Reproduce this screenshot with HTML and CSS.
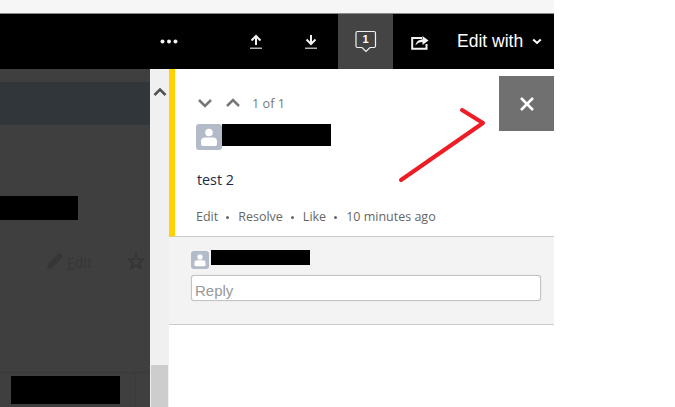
FILE: index.html
```html
<!DOCTYPE html>
<html lang="en">

<head>
    <meta charset="UTF-8">
    <meta name="viewport" content="width=device-width, initial-scale=1.0">
    <title>Comments</title>
    <link rel="stylesheet" href="styles.css">
</head>

<body>
    <div class="window">
        <div class="browser-strip"></div>
        <header class="topbar">
            <span class="tool tool-more">
                <svg width="18" height="5" viewBox="0 0 18 5"><circle cx="2.500" cy="2.500" r="2" /><circle cx="9" cy="2.500" r="2" /><circle cx="15.500" cy="2.500" r="2" /></svg>
            </span>
            <span class="tool tool-up">
                <svg width="14" height="16" viewBox="0 0 14 16"><path class="arrow-line" d="M7 11 V2 M2.500 6.500 L7 2 L11.500 6.500" /><rect x="1" y="13.500" width="12" height="1.500" /></svg>
            </span>
            <span class="tool tool-down">
                <svg width="14" height="16" viewBox="0 0 14 16"><path class="arrow-line" d="M7 1 V10 M2.500 5.500 L7 10 L11.500 5.500" /><rect x="1" y="13.500" width="12" height="1.500" /></svg>
            </span>
            <span class="tool tool-comment">
                <svg width="22" height="24" viewBox="0 0 22 24"><path class="bubble" d="M2.500 1.500 H19 C20 1.500 20.500 2 20.500 3 V16 C20.500 17 20 17.500 19 17.500 H15 L11 21.500 L7 17.500 H2.500 C1.500 17.500 1 17 1 16 V3 C1 2 1.500 1.500 2.500 1.500 Z" /></svg>
                <span class="comment-num">1</span>
            </span>
            <span class="tool tool-share">
                <svg width="18" height="16" viewBox="0 0 18 16"><path class="share-box" d="M11 4 H1.200 V14.800 H15.500 V10" /><path d="M4.500 11.500 C5 7.500 8 5.500 11.500 5.500 V2 L17.500 6.500 L11.500 11 V8 C9 8 6 9 4.500 11.500 Z" /></svg>
            </span>
            <span class="edit-with">Edit with
                <svg width="10" height="7" viewBox="0 0 10 7"><path class="chev-white" d="M1.200 1.500 L5 5 L8.800 1.500" /></svg>
            </span>
        </header>

        <div class="content">
            <section class="dimmed">
                <div class="dim-band"></div>
                <div class="redact redact-title"></div>
                <div class="dim-actions">
                    <svg width="18" height="18" viewBox="0 0 18 18"><path d="M1 17 L2 12 L12 2 C13 1 14 1 15 2 L16 3 C17 4 17 5 16 6 L6 16 Z" /></svg>
                    <span class="dim-edit"><u>E</u>dit</span>
                    <svg class="dim-star" width="18" height="18" viewBox="0 0 18 18"><path d="M9 2 L11 7 L16.500 7.300 L12.300 10.800 L13.700 16.200 L9 13.200 L4.300 16.200 L5.700 10.800 L1.500 7.300 L7 7 Z" /></svg>
                </div>
                <div class="dim-footer">
                    <div class="redact redact-footer"></div>
                    <div class="dim-divider"></div>
                </div>
            </section>

            <aside class="scrollbar">
                <svg class="scroll-up" width="14" height="10" viewBox="0 0 14 10"><path d="M1.500 8 L7 2.500 L12.500 8" /></svg>
                <div class="scroll-thumb"></div>
            </aside>

            <main class="panel">
                <article class="comment">
                    <div class="pager">
                        <svg width="16" height="10" viewBox="0 0 16 10"><path d="M2 2 L8 8 L14 2" /></svg>
                        <svg width="16" height="10" viewBox="0 0 16 10"><path d="M2 8 L8 2 L14 8" /></svg>
                        <span class="pager-count">1 of 1</span>
                    </div>
                    <div class="author">
                        <span class="avatar">
                            <svg width="26" height="26" viewBox="0 0 26 26"><circle cx="13" cy="8.500" r="3.800" /><path d="M5 20 V17 C5 14.500 7 13.500 9 13.500 H17 C19 13.500 21 14.500 21 17 V20 C21 21.500 20 22 19 22 H7 C6 22 5 21.500 5 20 Z" /></svg>
                        </span>
                        <span class="redact redact-author"></span>
                    </div>
                    <p class="comment-text">test 2</p>
                    <div class="comment-meta">
                        <span>Edit</span><span class="dot"></span>
                        <span>Resolve</span><span class="dot"></span>
                        <span>Like</span><span class="dot"></span>
                        <span>10 minutes ago</span>
                    </div>
                </article>
                <div class="reply-box">
                    <div class="reply-author">
                        <span class="avatar avatar-small">
                            <svg width="18" height="18" viewBox="0 0 26 26"><circle cx="13" cy="8.500" r="3.800" /><path d="M5 20 V17 C5 14.500 7 13.500 9 13.500 H17 C19 13.500 21 14.500 21 17 V20 C21 21.500 20 22 19 22 H7 C6 22 5 21.500 5 20 Z" /></svg>
                        </span>
                        <span class="redact redact-reply"></span>
                    </div>
                    <div class="reply-input">Reply</div>
                </div>

                <button class="close-btn" aria-label="Close">
                    <svg width="16" height="16" viewBox="0 0 16 16"><path d="M2 2 L14 14 M14 2 L2 14" /></svg>
                </button>
                <svg class="red-arrow" width="100" height="85" viewBox="0 0 100 85"><path d="M6 75 L88 18 L67 5" /></svg>
            </main>
        </div>
    </div>
</body>

</html>
```

FILE: styles.css
```css
html,
body {
    margin: 0;
    height: 407px;
    overflow: hidden;
    background: #fff;
}

body {
    font-family: 'Open Sans', 'Noto Sans', Arial, sans-serif;
}

.window {
    width: 554px;
    height: 407px;
    display: flex;
    flex-direction: column;
}

.browser-strip {
    height: 13px;
    background: #f6f6f6;
    border-bottom: 1px solid #8a8a8a;
}

.topbar {
    height: 55px;
    background: #000;
    color: #fff;
    display: flex;
    align-items: center;
    flex-shrink: 0;
}

.tool {
    display: flex;
    align-items: center;
    justify-content: center;
    height: 55px;
}

.tool svg {
    fill: #f2f2f2;
}

.tool-more {
    margin-left: 160px;
}

.tool-up {
    margin-left: 71px;
}

.tool-down {
    margin-left: 41px;
}

.tool .arrow-line {
    fill: none;
    stroke: #f2f2f2;
    stroke-width: 2;
}

.tool svg rect {
    fill: #b0b0b0;
}

.tool-comment {
    position: relative;
    width: 55px;
    margin-left: 20px;
    background: #444;
}

.tool-comment .bubble {
    fill: none;
    stroke: #f2f2f2;
    stroke-width: 1.200;
}

.comment-num {
    position: absolute;
    top: 19px;
    left: 0;
    right: 0;
    text-align: center;
    font-family: 'Liberation Sans', Arial, sans-serif;
    font-size: 11px;
    font-weight: bold;
    line-height: 13px;
}

.tool-share {
    margin-left: 18px;
}

.tool-share .share-box {
    fill: none;
    stroke: #f2f2f2;
    stroke-width: 2;
}

.edit-with {
    margin-left: 28px;
    font-family: 'Liberation Sans', Arial, sans-serif;
    font-size: 17.500px;
    display: flex;
    align-items: center;
    gap: 9px;
    white-space: nowrap;
}

.chev-white {
    fill: none;
    stroke: #fff;
    stroke-width: 2;
}

.content {
    flex: 1;
    display: flex;
    min-height: 0;
}

.dimmed {
    width: 150px;
    background: #3f3f3f;
    display: flex;
    flex-direction: column;
    overflow: hidden;
}

.dim-band {
    height: 43px;
    margin-top: 13px;
    background: #30363a;
}

.redact {
    background: #000;
    display: block;
}

.redact-title {
    width: 78px;
    height: 24px;
    margin-top: 71px;
}

.dim-actions {
    display: flex;
    align-items: center;
    margin: 33px 0 0 46px;
    color: #363636;
    font-size: 14px;
    white-space: nowrap;
}

.dim-actions svg {
    fill: #363636;
    flex-shrink: 0;
    margin-top: -3px;
}

.dim-edit {
    margin-left: 3px;
}

.dim-actions .dim-star {
    fill: none;
    stroke: #363636;
    stroke-width: 2;
    margin-left: 35px;
}

.dim-footer {
    position: relative;
    margin-top: auto;
    height: 31px;
    border-top: 1px solid #3a3a3a;
    padding: 3px 0 0 11px;
}

.redact-footer {
    width: 109px;
    height: 28px;
}

.dim-divider {
    position: absolute;
    left: 135px;
    top: 0;
    bottom: 0;
    border-left: 1px solid #3a3a3a;
}

.scrollbar {
    width: 19px;
    background: #f0f0f0;
    display: flex;
    flex-direction: column;
    align-items: center;
}

.scroll-up {
    margin-top: 18px;
    fill: none;
    stroke: #505050;
    stroke-width: 2.500;
}

.scroll-thumb {
    width: 17px;
    height: 42px;
    margin-top: auto;
    background: #cdcdcd;
}

.panel {
    position: relative;
    flex: 1;
    background: #fff;
}

.comment {
    height: 168px;
    box-sizing: border-box;
    border-left: 6px solid #ffd200;
    border-bottom: 1px solid #ccc;
    padding: 24px 0 0 21px;
}

.pager {
    display: flex;
    align-items: center;
    gap: 12px;
    height: 20px;
    margin-left: 1px;
}

.pager svg {
    fill: none;
    stroke: #777;
    stroke-width: 2.500;
}

.pager-count {
    font-size: 12.700px;
    color: #777;
    margin-left: -1px;
}

.author {
    display: flex;
    align-items: flex-start;
    margin-top: 11px;
}

.avatar {
    width: 26px;
    height: 26px;
    background: #b3bac8;
    border-radius: 3px;
    display: flex;
    flex-shrink: 0;
}

.avatar svg {
    fill: #fff;
}

.redact-author {
    width: 109px;
    height: 22px;
}

.comment-text {
    margin: 20px 0 0 1px;
    font-size: 14.300px;
    line-height: 20px;
    color: #1c2b4a;
}

.comment-meta {
    display: flex;
    align-items: center;
    margin-top: 18px;
    font-size: 12.500px;
    line-height: 18px;
    color: #666;
}

.dot {
    width: 3px;
    height: 3px;
    border-radius: 50%;
    background: #666;
    margin: 0 9px 0 8px;
}

.reply-box {
    height: 88px;
    box-sizing: border-box;
    background: #f3f3f3;
    border-bottom: 1px solid #ccc;
    padding: 14px 13px 0 22px;
}

.reply-author {
    display: flex;
    align-items: flex-start;
}

.avatar-small {
    width: 18px;
    height: 18px;
}

.redact-reply {
    width: 99px;
    height: 15px;
    margin: -1px 0 0 2px;
}

.reply-input {
    height: 24px;
    margin-top: 6px;
    background: #fff;
    border: 1px solid #c4c4c4;
    border-radius: 3px;
    box-shadow: 0 0 1px #bbb;
    padding-left: 3px;
    font-family: 'Liberation Sans', Arial, sans-serif;
    font-size: 15px;
    line-height: 29px;
    color: #999;
}

.close-btn {
    position: absolute;
    top: 7px;
    right: 0;
    width: 55px;
    height: 55px;
    padding: 0;
    border: none;
    background: #707070;
    display: flex;
    align-items: center;
    justify-content: center;
}

.close-btn svg {
    fill: none;
    stroke: #fff;
    stroke-width: 2.600;
}

.red-arrow {
    position: absolute;
    left: 226px;
    top: 36px;
    fill: none;
    stroke: #ee1c25;
    stroke-width: 4;
    stroke-linecap: round;
    stroke-linejoin: round;
}
```
